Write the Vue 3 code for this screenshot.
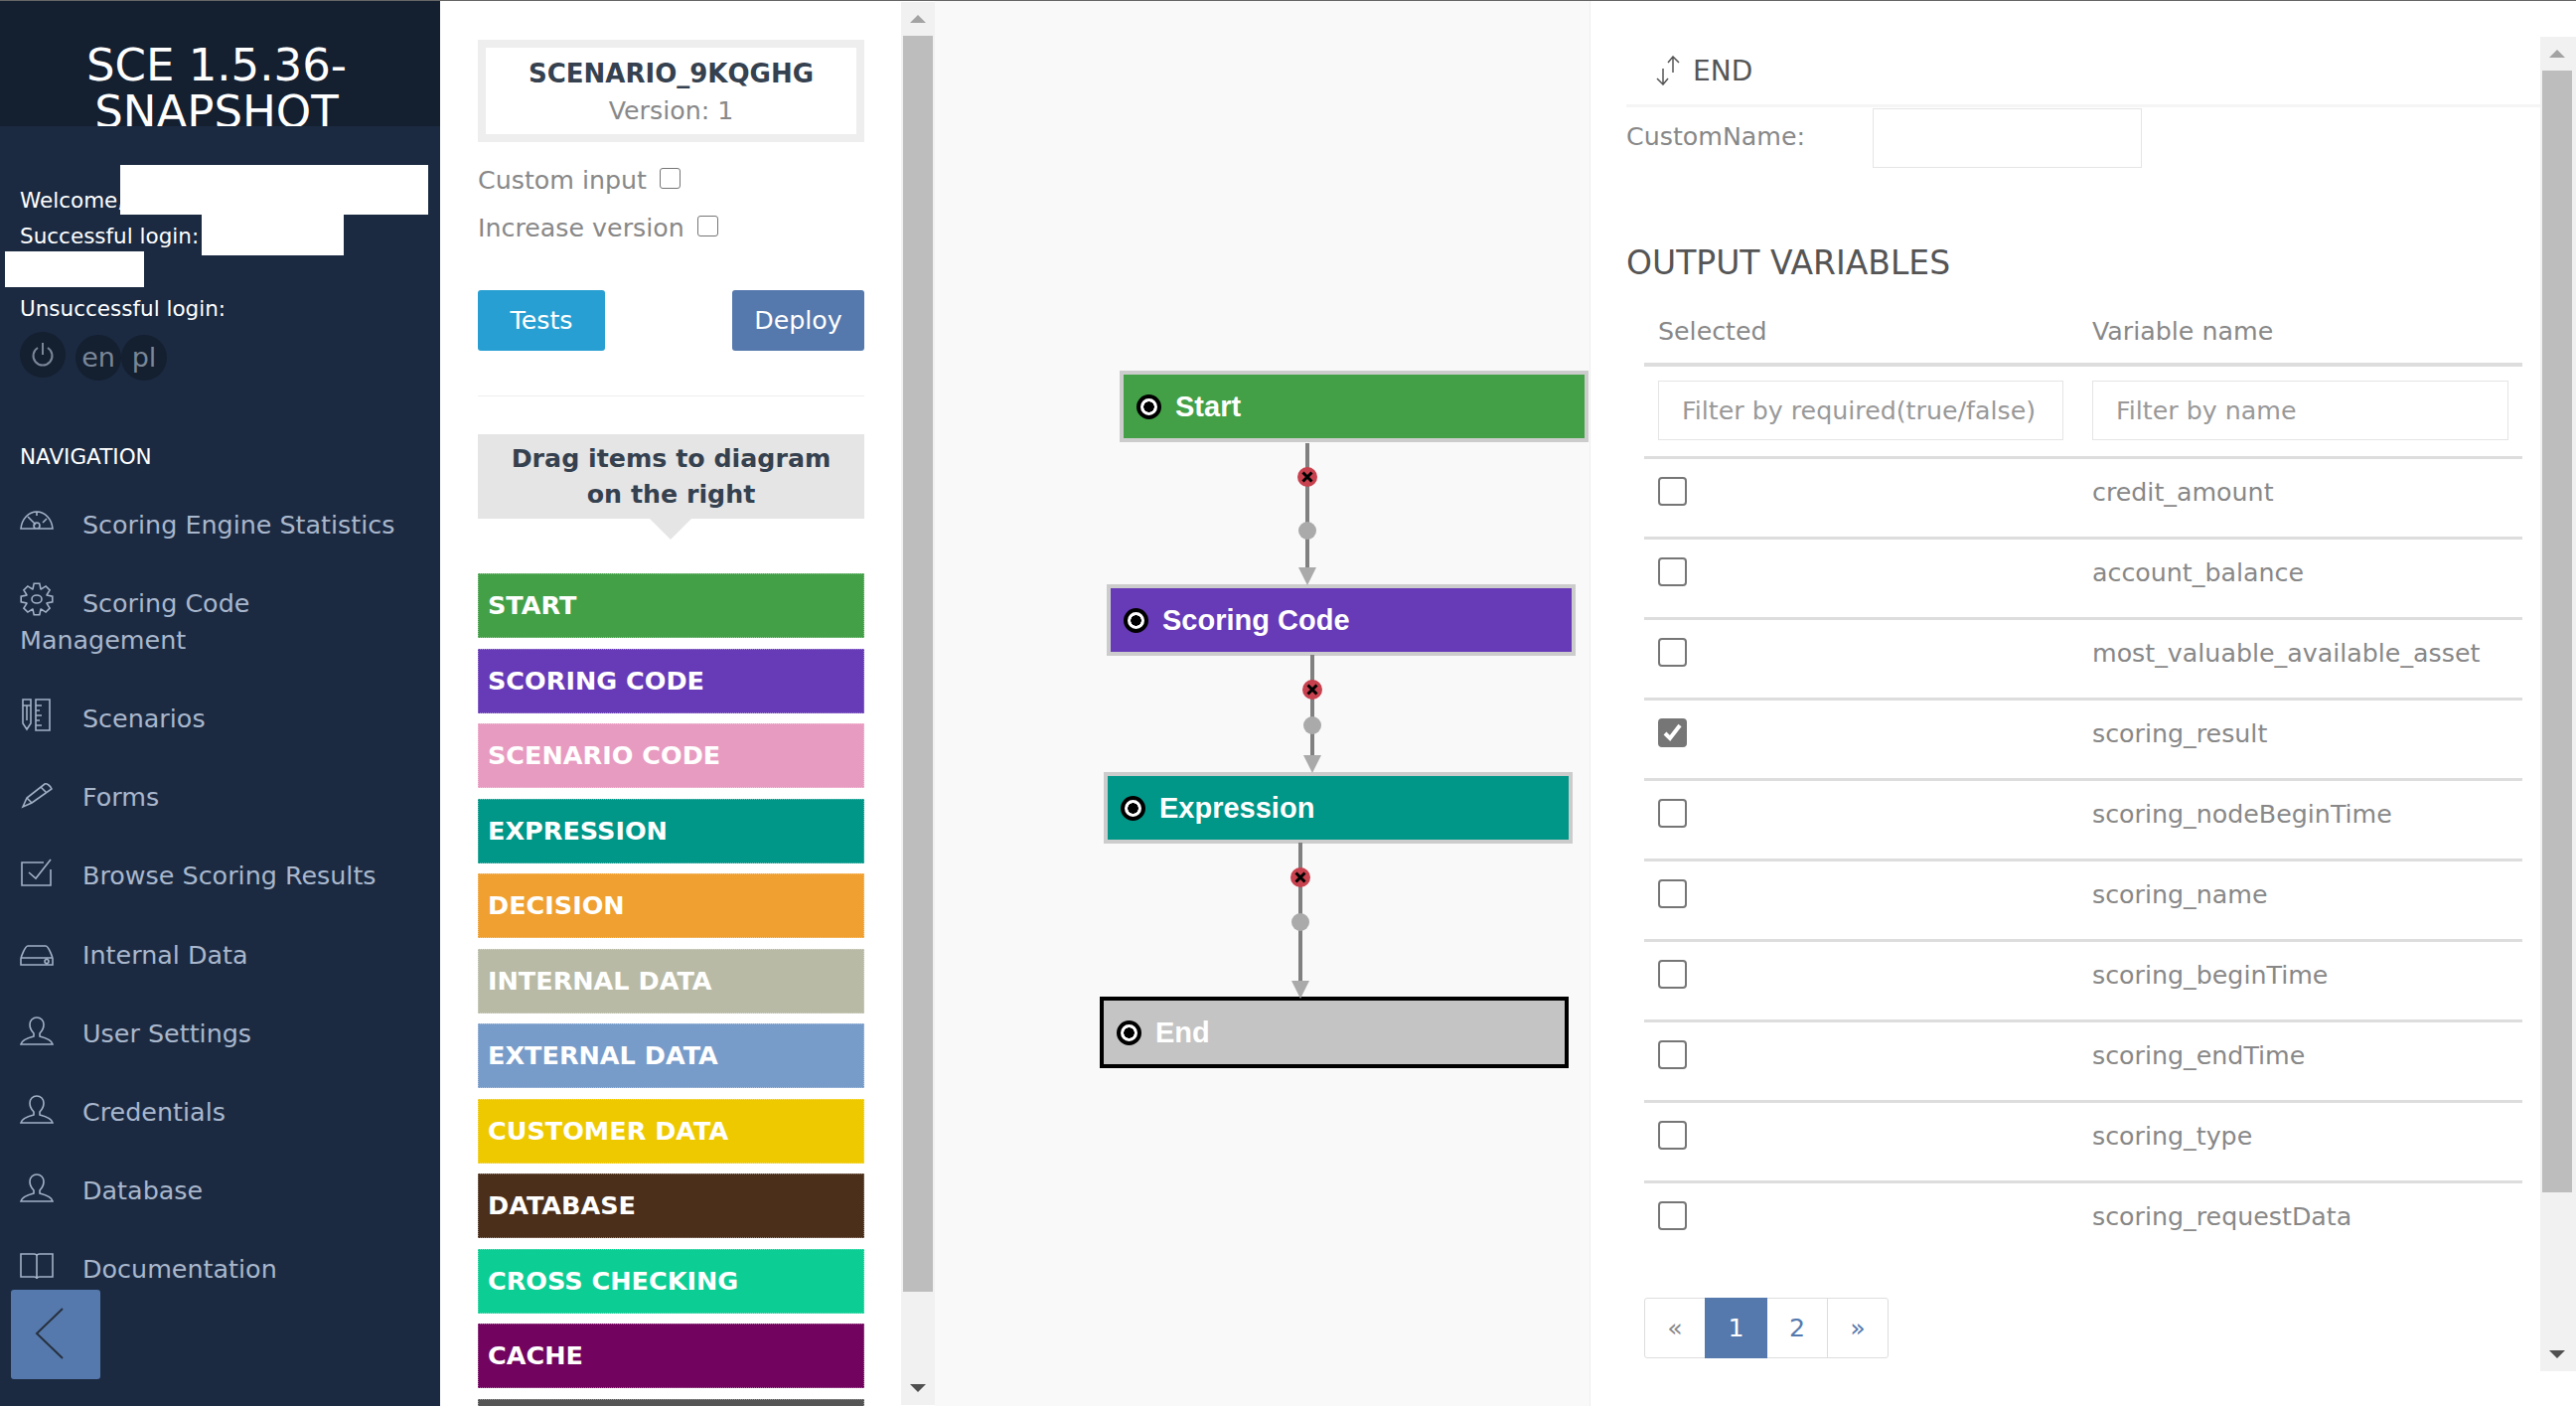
<script setup>
const gearPath = () => {
  let d = ''
  const teeth = 8
  for (let i = 0; i < teeth; i++) {
    const a = (i / teeth) * Math.PI * 2
    const step = Math.PI / teeth
    const pts = [
      [a - step * 0.95, 11],
      [a - step * 0.45, 16],
      [a + step * 0.45, 16],
      [a + step * 0.95, 11],
    ]
    pts.forEach(([t, r], j) => {
      const x = 17 + r * Math.cos(t)
      const y = 17 + r * Math.sin(t)
      d += `${i === 0 && j === 0 ? 'M' : 'L'}${x.toFixed(1)} ${y.toFixed(1)}`
    })
  }
  return d + 'Z M12 17a5 4 0 1 0 10 0a5 4 0 1 0 -10 0'
}

const userIcon = 'M17 5c-4 0-7 3-7 7 0 4 2 7 4 9v3c-4 1-12 3-13 8h32c-1-5-9-7-13-8v-3c2-2 4-5 4-9 0-4-3-7-7-7z'

const navItems = [
  { label: 'Scoring Engine Statistics', icon: 'M1 25C2 15 9 8 17 8s15 7 16 17z M17 8v4 M8 13l8 8 M14 22a3 3 0 1 0 6 0a3 3 0 1 0-6 0 M27 15l-4 4' },
  { label: 'Scoring Code Management', icon: gearPath() },
  { label: 'Scenarios', icon: 'M3 2h8v24l-4 6-4-6z M3 8h8 M7 8v15 M16 2h14v31H16z M16 8h6 M16 13h4 M16 18h6 M16 23h4 M16 28h6' },
  { label: 'Forms', icon: 'M3 31l4-9L25 8c2-1 6 2 7 5L12 27z M21 11l6 6 M7 22l5 5' },
  { label: 'Browse Scoring Results', icon: 'M24 8H2v23h29V15 M9 18l7 6L31 5' },
  { label: 'Internal Data', icon: 'M1 25c0-1 4-13 7-13h18c3 0 7 12 7 13v6H1z M1 24h32 M25 27.5a2 2 0 1 0 4 0a2 2 0 1 0-4 0' },
  { label: 'User Settings', icon: userIcon },
  { label: 'Credentials', icon: userIcon },
  { label: 'Database', icon: userIcon },
  { label: 'Documentation', icon: 'M1 6h13c2 0 3 1 3 2 0-1 1-2 3-2h13v23H20c-2 0-3 1-3 2 0-1-1-2-3-2H1z M17 8v23' },
]

const palette = [
  { label: 'START', color: '#43a047' },
  { label: 'SCORING CODE', color: '#673ab7' },
  { label: 'SCENARIO CODE', color: '#e89bc0' },
  { label: 'EXPRESSION', color: '#009688' },
  { label: 'DECISION', color: '#f0a030' },
  { label: 'INTERNAL DATA', color: '#b8baa5' },
  { label: 'EXTERNAL DATA', color: '#789cca' },
  { label: 'CUSTOMER DATA', color: '#efc900' },
  { label: 'DATABASE', color: '#4b2f1a' },
  { label: 'CROSS CHECKING', color: '#0cce94' },
  { label: 'CACHE', color: '#72035e' },
  { label: '', color: '#555555' },
]

const nodes = [
  { label: 'Start', x: 186, y: 372, color: '#43a047' },
  { label: 'Scoring Code', x: 173, y: 587, color: '#673ab7' },
  { label: 'Expression', x: 170, y: 776, color: '#009688' },
  { label: 'End', x: 166, y: 1002, color: '#c4c4c4', active: true },
]

const edges = [
  { x: 375, y1: 445, red: 479, grey: 533, tip: 588 },
  { x: 380, y1: 658, red: 693, grey: 729, tip: 777 },
  { x: 368, y1: 847, red: 882, grey: 927, tip: 1004 },
]

const variables = [
  { name: 'credit_amount', selected: false },
  { name: 'account_balance', selected: false },
  { name: 'most_valuable_available_asset', selected: false },
  { name: 'scoring_result', selected: true },
  { name: 'scoring_nodeBeginTime', selected: false },
  { name: 'scoring_name', selected: false },
  { name: 'scoring_beginTime', selected: false },
  { name: 'scoring_endTime', selected: false },
  { name: 'scoring_type', selected: false },
  { name: 'scoring_requestData', selected: false },
]
</script>

<template>
  <div class="page">
    <aside class="sidebar">
      <div class="brand">SCE 1.5.36-SNAPSHOT</div>
      <div class="user">
        <div class="user-line">Welcome,</div>
        <div class="user-line">Successful login:</div>
        <div class="user-line">&nbsp;</div>
        <div class="user-line">Unsuccessful login:</div>
        <span class="redact redact-a"></span>
        <span class="redact redact-b"></span>
        <span class="redact redact-c"></span>
      </div>
      <div class="round-buttons">
        <span class="round power">
          <svg width="24" height="26" viewBox="0 0 24 26" fill="none" stroke="currentColor" stroke-width="2">
            <path d="M12 1v12" />
            <path d="M7 6a9.5 9.5 0 1 0 10 0" />
          </svg>
        </span>
        <span class="round lang">en</span>
        <span class="round lang">pl</span>
      </div>
      <div class="nav-title">NAVIGATION</div>
      <nav class="nav">
        <div v-for="item in navItems" :key="item.label" class="nav-item">
          <svg class="nav-icon" width="34" height="34" viewBox="0 0 34 34" fill="none" stroke="currentColor" stroke-width="1.6">
            <path :d="item.icon" />
          </svg>{{ item.label }}
        </div>
      </nav>
      <button class="collapse">
        <svg width="30" height="52" viewBox="0 0 30 52" fill="none" stroke="#27303d" stroke-width="2">
          <path d="M28 1L2 26l26 25" />
        </svg>
      </button>
    </aside>

    <section class="tools">
      <div class="tools-body">
        <div class="scenario-box">
          <div class="scenario-name">SCENARIO_9KQGHG</div>
          <div class="scenario-version">Version: 1</div>
        </div>
        <div class="option option-first">Custom input <span class="check small"></span></div>
        <div class="option">Increase version <span class="check small"></span></div>
        <div class="actions">
          <button class="btn btn-tests">Tests</button>
          <button class="btn btn-deploy">Deploy</button>
        </div>
        <div class="divider"></div>
        <div class="drag-hint">Drag items to diagram on the right</div>
        <div class="palette">
          <div v-for="item in palette" :key="item.color" class="palette-item" :style="{ background: item.color }">
            {{ item.label }}
          </div>
        </div>
      </div>
      <div class="scrollbar tools-scroll">
        <div class="arrow arrow-up"></div>
        <div class="thumb tools-thumb"></div>
        <div class="arrow arrow-down"></div>
      </div>
    </section>

    <section class="canvas">
      <div
        v-for="node in nodes"
        :key="node.label"
        class="node"
        :class="{ 'node-active': node.active }"
        :style="{ left: node.x + 'px', top: node.y + 'px', background: node.color }"
      >
        <span class="node-ring"></span>
        <span>{{ node.label }}</span>
      </div>
      <svg class="edges" width="659" height="1414">
        <g v-for="edge in edges" :key="edge.x">
          <path :d="`M${edge.x} ${edge.y1}V${edge.tip - 12}`" stroke="#808080" stroke-width="4" />
          <path :d="`M${edge.x - 9} ${edge.tip - 18}h18l-9 18z`" fill="#aaaaaa" />
          <circle :cx="edge.x" :cy="edge.grey" r="9" fill="#aaaaaa" />
          <circle :cx="edge.x" :cy="edge.red" r="10" fill="#c8414e" />
          <path
            :d="`M${edge.x - 4.5} ${edge.red - 4.5}l9 9m0-9l-9 9`"
            stroke="#000"
            stroke-width="3"
          />
        </g>
      </svg>
    </section>

    <section class="details">
      <div class="details-scroll">
        <div class="details-body">
          <div class="details-head">
            <svg width="28" height="30" viewBox="0 0 28 30" fill="none" stroke="#555" stroke-width="1.5">
              <path d="M9 13v16M3 23l6 6 5-6" />
              <path d="M19 17V1M14 7l5-6 6 6" />
            </svg>
            <span>END</span>
          </div>
          <div class="custom-row">
            <label class="custom-label">CustomName:</label>
            <input class="custom-input" type="text" />
          </div>
          <h3 class="section-title">OUTPUT VARIABLES</h3>
          <table class="vars">
            <thead>
              <tr class="head-row">
                <th>Selected</th>
                <th>Variable name</th>
              </tr>
              <tr class="filter-row">
                <th><input class="filter filter-a" placeholder="Filter by required(true/false)" /></th>
                <th><input class="filter filter-b" placeholder="Filter by name" /></th>
              </tr>
            </thead>
            <tbody>
              <tr v-for="row in variables" :key="row.name">
                <td>
                  <span class="check" :class="{ checked: row.selected }">
                    <svg v-if="row.selected" class="tick" width="25" height="25" viewBox="0 0 25 25" fill="none" stroke="#fff" stroke-width="4">
                      <path d="M5 13l5 5L20 5" />
                    </svg>
                  </span>
                </td>
                <td>{{ row.name }}</td>
              </tr>
            </tbody>
          </table>
          <div class="pager">
            <span class="page-cell muted">«</span>
            <span class="page-cell current">1</span>
            <span class="page-cell">2</span>
            <span class="page-cell last">»</span>
          </div>
        </div>
        <div class="scrollbar details-bar">
          <div class="arrow arrow-up"></div>
          <div class="thumb details-thumb"></div>
          <div class="arrow arrow-down"></div>
        </div>
      </div>
    </section>
  </div>
</template>

<style scoped>
.page {
  display: flex;
  width: 2593px;
  height: 1415px;
  overflow: hidden;
  box-sizing: border-box;
  border-top: 1px solid #666;
  font-family: "DejaVu Sans", Verdana, sans-serif;
  font-size: 25.3px;
  color: #888;
  background: #fff;
}

/* sidebar */
.sidebar {
  position: relative;
  flex: 0 0 443px;
  background: #1b2a41;
  color: #fff;
  overflow: hidden;
}

.brand {
  height: 126px;
  overflow: hidden;
  box-sizing: border-box;
  padding: 41px 47px 0 40px;
  background: #141f30;
  font-size: 45px;
  line-height: 47px;
  text-align: center;
}

.user {
  position: relative;
  padding: 57px 0 0 20px;
  font-size: 21.5px;
  line-height: 36.4px;
}

.redact {
  position: absolute;
  background: #fff;
}

.redact-a {
  left: 121px;
  top: 39px;
  width: 310px;
  height: 50px;
}

.redact-b {
  left: 203px;
  top: 89px;
  width: 143px;
  height: 41px;
}

.redact-c {
  left: 5px;
  top: 126px;
  width: 140px;
  height: 36px;
}

.round-buttons {
  display: flex;
  align-items: flex-start;
  padding: 4px 0 0 20px;
}

.round {
  display: flex;
  align-items: center;
  justify-content: center;
  width: 46px;
  height: 46px;
  border-radius: 50%;
  background: #141f30;
  color: #7a8798;
  font-size: 27px;
}

.power {
  margin-right: 10px;
}

.lang {
  margin-top: 3px;
}

.nav-title {
  margin-top: 62px;
  padding-left: 20px;
  font-size: 21.5px;
  line-height: 30px;
}

.nav {
  display: flex;
  flex-direction: column;
  gap: 42.2px;
  margin-top: 35px;
  padding: 0 40px 0 20px;
  color: #a9b7cc;
  font-size: 25.4px;
  line-height: 37px;
}

.nav-icon {
  margin: -14px 29px -14px 0;
  vertical-align: 10px;
  color: #a3b1c6;
}

.collapse {
  position: absolute;
  left: 11px;
  top: 1297px;
  width: 90px;
  height: 90px;
  padding: 0 12px 0 0;
  border: 0;
  border-radius: 3px;
  background: #5579ad;
}

/* tools column */
.tools {
  display: flex;
  flex: 0 0 498px;
  overflow: hidden;
}

.tools-body {
  flex: 0 0 464px;
  box-sizing: border-box;
  height: 1414px;
  overflow: hidden;
  padding: 39px 37px 0 38px;
}

.scenario-box {
  box-sizing: border-box;
  height: 103px;
  padding-top: 8px;
  border: 8px solid #eee;
  text-align: center;
  line-height: 37px;
}

.scenario-name {
  color: #35414f;
  font-weight: 700;
  font-size: 26px;
}

.option {
  height: 48px;
  line-height: 48px;
  white-space: nowrap;
}

.option-first {
  margin-top: 15px;
}

.check {
  display: inline-block;
  box-sizing: border-box;
  width: 29px;
  height: 29px;
  border: 2px solid #767676;
  border-radius: 4px;
  background: #fff;
  vertical-align: top;
}

.check.small {
  width: 21px;
  height: 21px;
  margin: 11px 0 0 5px;
  border-width: 1.5px;
  border-radius: 3px;
}

.check.checked {
  background: #767676;
}

.tick {
  display: block;
}

.actions {
  display: flex;
  justify-content: space-between;
  margin-top: 38px;
}

.btn {
  height: 61px;
  padding: 0;
  border: 0;
  border-radius: 3px;
  color: #fff;
  font: inherit;
}

.btn-tests {
  width: 128px;
  background: #289fd2;
}

.btn-deploy {
  width: 133px;
  background: #5579ad;
}

.divider {
  margin-top: 45px;
  border-top: 1px solid #eee;
}

.drag-hint {
  position: relative;
  box-sizing: border-box;
  height: 85px;
  margin-top: 38px;
  padding: 7px 20px 0;
  background: #e5e5e5;
  color: #35414f;
  font-weight: 700;
  font-size: 25.3px;
  line-height: 36px;
  text-align: center;
}

.drag-hint::after {
  content: "";
  position: absolute;
  left: 173px;
  top: 85px;
  border-style: solid;
  border-width: 21px 21px 0;
  border-color: #e5e5e5 transparent transparent;
}

.palette {
  display: flex;
  flex-direction: column;
  gap: 10.5px;
  margin-top: 55px;
}

.palette-item {
  box-sizing: border-box;
  flex: 0 0 65px;
  padding-left: 9px;
  border: 1px dotted rgba(255, 255, 255, 0.4);
  color: #fff;
  font-weight: 700;
  font-size: 25.5px;
  line-height: 63px;
}

.scrollbar {
  display: flex;
  flex-direction: column;
  background: #f1f1f1;
}

.tools-scroll {
  flex: 0 0 34px;
  height: 1412px;
  margin-top: 1px;
  padding: 0 2px;
  box-sizing: border-box;
}

.arrow {
  flex: 0 0 34px;
  position: relative;
}

.arrow::after {
  content: "";
  position: absolute;
  left: 50%;
  top: 50%;
  margin: -4px 0 0 -8px;
  border-style: solid;
  border-color: transparent;
}

.arrow-up::after {
  border-width: 0 8px 8px;
  border-bottom-color: #a3a3a3;
}

.arrow-down::after {
  border-width: 8px 8px 0;
  border-top-color: #505050;
}

.thumb {
  flex: 0 0 auto;
  background: #bdbdbd;
}

.tools-thumb {
  height: 1264px;
}

.arrow-down {
  margin-top: auto;
}

/* diagram */
.canvas {
  position: relative;
  flex: 0 0 659px;
  height: 1414px;
  background: #f9f9f9;
}

.node {
  position: absolute;
  display: flex;
  align-items: center;
  gap: 14px;
  box-sizing: border-box;
  width: 472px;
  height: 72px;
  padding-left: 13px;
  border: 4px solid #cccccc;
  color: #fff;
  font-family: "Liberation Sans", Arial, sans-serif;
  font-weight: 700;
  font-size: 29px;
}

.node-active {
  border-color: #000;
}

.node-ring {
  box-sizing: border-box;
  flex: 0 0 25px;
  height: 25px;
  border: 4px solid #000;
  border-radius: 50%;
  background: radial-gradient(circle, #000 0 5px, #fff 5.5px);
}

.edges {
  position: absolute;
  left: 0;
  top: 0;
  pointer-events: none;
}

/* details panel */
.details {
  flex: 0 0 993px;
  box-sizing: border-box;
  border-left: 1px solid #eee;
}

.details-scroll {
  display: flex;
  height: 1343px;
  margin-top: 36px;
}

.details-body {
  flex: 0 0 956px;
  box-sizing: border-box;
  padding-left: 36px;
}

.details-head {
  display: flex;
  align-items: center;
  gap: 11px;
  box-sizing: border-box;
  height: 71px;
  padding: 0 0 0 28px;
  border-bottom: 3px solid #f5f5f5;
  color: #555;
  font-size: 28px;
}

.custom-row {
  display: flex;
  margin-top: 1px;
}

.custom-label {
  flex: 0 0 248px;
  line-height: 58px;
}

.custom-input {
  box-sizing: border-box;
  width: 271px;
  height: 60px;
  border: 1px solid #e5e5e5;
}

.section-title {
  margin: 72px 0 0;
  color: #555;
  font-weight: 400;
  font-size: 33px;
  line-height: 48px;
}

.vars {
  width: 884px;
  margin: 21px 0 0 18px;
  border-collapse: separate;
  border-spacing: 0;
  table-layout: fixed;
}

.vars th {
  padding: 0 14px;
  font-weight: 400;
  text-align: left;
}

.vars th:first-child,
.vars td:first-child {
  width: 437px;
}

.head-row th {
  height: 59px;
  border-bottom: 4px solid #ddd;
  line-height: 36px;
  padding-bottom: 8px;
  box-sizing: border-box;
}

.filter-row th {
  height: 93px;
  box-sizing: border-box;
  padding-top: 14px;
  padding-bottom: 16px;
  border-bottom: 3px solid #ddd;
}

.filter {
  display: block;
  box-sizing: border-box;
  height: 60px;
  padding: 0 23px;
  border: 1px solid #e5e5e5;
  font: inherit;
}

.filter-a {
  width: 408px;
}

.filter-b {
  width: 419px;
}

.filter::placeholder {
  color: #999;
}

.vars td {
  box-sizing: border-box;
  height: 81px;
  padding: 16px 14px 0;
  border-bottom: 3px solid #ddd;
  line-height: 36px;
  vertical-align: top;
}

.vars tr:last-child td {
  border-bottom: 0;
}

.vars td:first-child .check {
  margin-top: 2px;
}

.pager {
  display: inline-flex;
  margin: 34px 0 0 18px;
  height: 61px;
  box-sizing: border-box;
  border: 1px solid #ddd;
  border-radius: 3px;
}

.page-cell {
  display: flex;
  align-items: center;
  justify-content: center;
  width: 60px;
  color: #5579ad;
}

.page-cell.muted {
  color: #888;
}

.page-cell.current {
  width: 63px;
  margin: -1px 0;
  background: #5579ad;
  color: #fff;
}

.page-cell.last {
  border-left: 1px solid #ddd;
}

.details-bar {
  flex: 0 0 36px;
  box-sizing: border-box;
  padding: 0 4px 0 2px;
}

.details-thumb {
  height: 1129px;
}
</style>

<style>
body {
  margin: 0;
}
</style>
